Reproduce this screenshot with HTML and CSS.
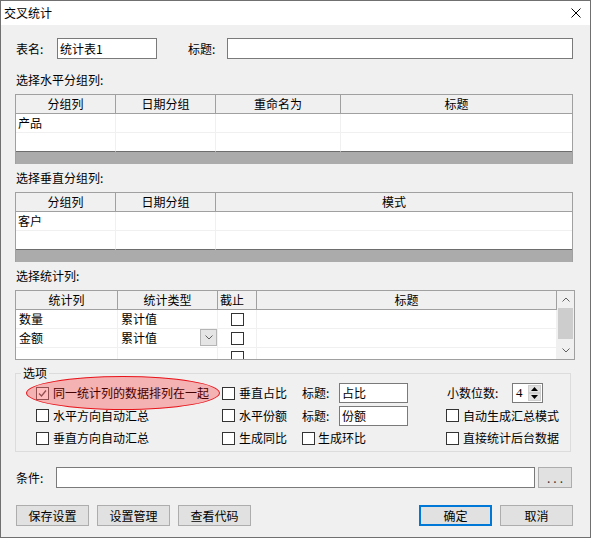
FILE: index.html
```html
<!DOCTYPE html>
<html lang="zh-CN">
<head>
<meta charset="utf-8">
<title>交叉统计</title>
<link rel="stylesheet" href="styles.css">
</head>
<body>
<div class="window">
  <div class="titlebar">
    <span class="title">交叉统计</span>
    <svg class="close" width="10" height="10" viewBox="0 0 10 10"><path d="M0.5 0.5L9.5 9.5M9.5 0.5L0.5 9.5" stroke="#000" stroke-width="1" fill="none"/></svg>
  </div>
  <div class="content">
    <div class="row1">
      <span class="lbl lbl-name">表名:</span>
      <div class="input in-name">统计表1</div>
      <span class="lbl lbl-title">标题:</span>
      <div class="input in-title"></div>
    </div>

    <div class="section">选择水平分组列:</div>
    <div class="grid g1">
      <div class="tr th"><div class="td">分组列</div><div class="td">日期分组</div><div class="td">重命名为</div><div class="td">标题</div></div>
      <div class="tr"><div class="td">产品</div><div class="td"></div><div class="td"></div><div class="td"></div></div>
      <div class="tr last"><div class="td"></div><div class="td"></div><div class="td"></div><div class="td"></div></div>
      <div class="hbar"></div>
    </div>

    <div class="section">选择垂直分组列:</div>
    <div class="grid g2">
      <div class="tr th"><div class="td">分组列</div><div class="td">日期分组</div><div class="td">模式</div></div>
      <div class="tr"><div class="td">客户</div><div class="td"></div><div class="td"></div></div>
      <div class="tr last"><div class="td"></div><div class="td"></div><div class="td"></div></div>
      <div class="hbar"></div>
    </div>

    <div class="section">选择统计列:</div>
    <div class="g3">
      <div class="main">
        <div class="tr th"><div class="td">统计列</div><div class="td">统计类型</div><div class="td left">截止</div><div class="td">标题</div></div>
        <div class="tr"><div class="td">数量</div><div class="td">累计值</div><div class="td cbcell"><span class="cb"></span></div><div class="td"></div></div>
        <div class="tr"><div class="td">金额</div><div class="td combo"><span>累计值</span><span class="dd"><svg width="8" height="5" viewBox="0 0 8 5"><path d="M0.5 0.5L4 4L7.5 0.5" stroke="#606060" fill="none"/></svg></span></div><div class="td cbcell"><span class="cb"></span></div><div class="td"></div></div>
        <div class="tr"><div class="td"></div><div class="td"></div><div class="td cbcell"><span class="cb"></span></div><div class="td"></div></div>
      </div>
      <div class="vbar">
        <div class="arrow"><svg width="8" height="5" viewBox="0 0 8 5"><path d="M0.5 4.5L4 1L7.5 4.5" stroke="#606060" fill="none"/></svg></div>
        <div class="thumb"></div>
        <div class="track"></div>
        <div class="arrow"><svg width="8" height="5" viewBox="0 0 8 5"><path d="M0.5 0.5L4 4L7.5 0.5" stroke="#606060" fill="none"/></svg></div>
      </div>
    </div>

    <fieldset class="options">
      <legend>选项</legend>
      <div class="optgrid">
        <div class="opt"><span class="cb checked"><svg width="11" height="11" viewBox="0 0 11 11"><path d="M2 5.5L4.5 8L9 2.5" stroke="#6c6c6c" stroke-width="1.3" fill="none"/></svg></span><span>同一统计列的数据排列在一起</span></div>
        <div class="opt"><span class="cb"></span><span>垂直占比</span></div>
        <div class="pair"><span class="plbl">标题:</span><div class="input small">占比</div></div>
        <div class="pair"><span class="dlbl">小数位数:</span><div class="spin"><span class="val">4</span><span class="spinbtns"><span class="sb"><svg width="7" height="4" viewBox="0 0 7 4"><path d="M0 4L3.5 0L7 4Z" fill="#000"/></svg></span><span class="sb"><svg width="7" height="4" viewBox="0 0 7 4"><path d="M0 0L3.5 4L7 0Z" fill="#000"/></svg></span></span></div></div>

        <div class="opt"><span class="cb"></span><span>水平方向自动汇总</span></div>
        <div class="opt"><span class="cb"></span><span>水平份额</span></div>
        <div class="pair"><span class="plbl">标题:</span><div class="input small">份额</div></div>
        <div class="opt"><span class="cb"></span><span>自动生成汇总模式</span></div>

        <div class="opt"><span class="cb"></span><span>垂直方向自动汇总</span></div>
        <div class="opt"><span class="cb"></span><span>生成同比</span></div>
        <div class="opt tight"><span class="cb"></span><span>生成环比</span></div>
        <div class="opt"><span class="cb"></span><span>直接统计后台数据</span></div>
      </div>
    </fieldset>

    <div class="condrow">
      <span class="lbl lbl-cond">条件:</span>
      <div class="input in-cond"></div>
      <div class="btn dots">...</div>
    </div>

    <div class="btnrow">
      <div class="btn">保存设置</div>
      <div class="btn">设置管理</div>
      <div class="btn">查看代码</div>
      <div class="spacer"></div>
      <div class="btn primary">确定</div>
      <div class="btn">取消</div>
    </div>
  </div>
  <div class="highlight"></div>
</div>
</body>
</html>
```
FILE: styles.css
```css
* { box-sizing: border-box; }
html, body { margin: 0; padding: 0; }
body {
  font-family: "Noto Sans CJK SC", "Noto Sans", sans-serif;
  font-size: 12px;
  color: #000;
  background: #f0f0f0;
}
.window {
  position: relative;
  width: 591px;
  height: 538px;
  border: 1px solid #707070;
  background: #f0f0f0;
  overflow: hidden;
}
.titlebar {
  height: 24px;
  background: #fff;
  display: flex;
  align-items: center;
  justify-content: space-between;
  padding-left: 3px;
  padding-right: 9px;
}
.title { line-height: 16px; }
.close { display: block; }

.content { padding-left: 14px; }

.row1 {
  margin-top: 13px;
  height: 21px;
  display: flex;
  align-items: center;
}
.lbl { line-height: 16px; white-space: nowrap; }
.lbl-name { margin-left: 1px; width: 41px; }
.lbl-title { margin-left: 31px; width: 39px; }
.input {
  height: 21px;
  border: 1px solid #7a7a7a;
  background: #fff;
  padding-left: 2px;
  line-height: 19px;
  white-space: nowrap;
}
.in-name { width: 100px; }
.in-title { width: 346px; }

.section {
  margin-top: 11px;
  height: 20px;
  line-height: 20px;
  padding-left: 1px;
}
.g1 ~ .section { margin-top: 4px; }
.grid {
  margin-top: 4px;
  width: 558px;
  border: 1px solid #a0a0a0;
  border-bottom: none;
}
.tr { display: grid; }
.g1 .tr { grid-template-columns: 100px 100px 125px 1fr; }
.g2 .tr { grid-template-columns: 100px 100px 1fr; }
.td {
  height: 19px;
  line-height: 18px;
  border-right: 1px solid #f0f0f0;
  border-bottom: 1px solid #f0f0f0;
  background: #fff;
  padding-left: 2px;
  white-space: nowrap;
  overflow: hidden;
}
.td:last-child { border-right: none; }
.th .td {
  background: #f0f0f0;
  border-right: 1px solid #a0a0a0;
  border-bottom: 1px solid #a0a0a0;
  text-align: center;
  padding-left: 0;
}
.th .td:last-child { border-right: none; }
.tr.last .td { border-bottom-color: #6d6d6d; }
.hbar { height: 12px; background: #ababab; }

.g3 {
  margin-top: 4px;
  width: 560px;
  height: 70px;
  border: 1px solid #a0a0a0;
  display: flex;
}
.g3 .main { width: 541px; overflow: hidden; }
.g3 .tr { grid-template-columns: 102px 100px 39px 300px; }
.g3 .td { padding-left: 3px; }
.g3 .td:last-child { border-right: 1px solid #f0f0f0; }
.g3 .th .td { padding-left: 0; }
.g3 .th .td:last-child { border-right: 1px solid #a0a0a0; }
.g3 .th .td.left { text-align: left; padding-left: 2px; }
.cbcell { display: flex; align-items: center; justify-content: center; padding-left: 0 !important; }
.combo { display: flex; justify-content: space-between; padding-right: 0; }
.dd {
  width: 17px;
  height: 17px;
  margin-top: 0;
  background: #e5e5e5;
  border: 1px solid #b5b5b5;
  display: flex;
  align-items: center;
  justify-content: center;
}
.dd svg, .arrow svg, .sb svg { display: block; }
.vbar {
  width: 17px;
  background: #f0f0f0;
  display: flex;
  flex-direction: column;
}
.arrow { height: 17px; display: flex; align-items: center; justify-content: center; }
.thumb { height: 31px; background: #cdcdcd; margin: 0 1px; }
.track { flex: 1; }

.cb {
  display: inline-block;
  width: 13px;
  height: 13px;
  border: 1px solid #333;
  background: #fff;
  flex: none;
  position: relative;
}
.cb.checked { border-color: #6c6c6c; }
.cb.checked svg { display: block; position: absolute; left: 0; top: 0; }

.options {
  margin: 6px 0 0 0;
  width: 556px;
  border: 1px solid #dcdcdc;
  padding: 2px 0 2px 5px;
  min-width: 0;
}
.options legend {
  padding: 0 2px;
  line-height: 14px;
}
.optgrid {
  margin-left: 15px;
  display: grid;
  grid-template-columns: 186px 80px 144px 1fr;
  grid-template-rows: 22px 23px 22px;
  align-items: center;
}
.opt { display: flex; align-items: center; gap: 4px; white-space: nowrap; line-height: 16px; }
.opt.tight { gap: 3px; }
.pair { display: flex; align-items: center; white-space: nowrap; }
.plbl { width: 37px; line-height: 16px; }
.input.small { width: 69px; height: 20px; line-height: 18px; }
.dlbl { width: 65px; line-height: 16px; margin-left: 1px; }
.spin {
  width: 31px;
  height: 20px;
  border: 1px solid #7a7a7a;
  background: #fff;
  display: flex;
  justify-content: space-between;
  padding: 1px;
}
.spin .val { padding-left: 2px; line-height: 16px; font-family: "Liberation Serif", serif; font-size: 13px; }
.spinbtns { display: flex; flex-direction: column; width: 13px; }
.sb {
  flex: 1;
  background: #e1e1e1;
  border: 1px solid #cfcfcf;
  display: flex;
  align-items: center;
  justify-content: center;
}

.condrow {
  margin-top: 15px;
  height: 21px;
  display: flex;
  align-items: center;
}
.lbl-cond { margin-left: 1px; width: 40px; }
.in-cond { width: 479px; }
.btn {
  height: 21px;
  width: 73px;
  background: #e1e1e1;
  border: 1px solid #adadad;
  text-align: center;
  line-height: 19px;
  white-space: nowrap;
}
.dots { width: 34px; margin-left: 3px; letter-spacing: 3px; padding-left: 3px; color: #333; }

.btnrow {
  margin-top: 17px;
  width: 558px;
  display: flex;
  align-items: center;
  gap: 8px;
  padding-left: 1px;
}
.spacer { flex: 1; }
.btn.primary { border: 2px solid #0078d7; line-height: 17px; }

.highlight {
  position: absolute;
  left: 25px;
  top: 375px;
  width: 194px;
  height: 34px;
  border: 1.5px solid #e8141b;
  border-radius: 50%;
  background: rgba(255, 0, 0, 0.26);
  pointer-events: none;
}
```
